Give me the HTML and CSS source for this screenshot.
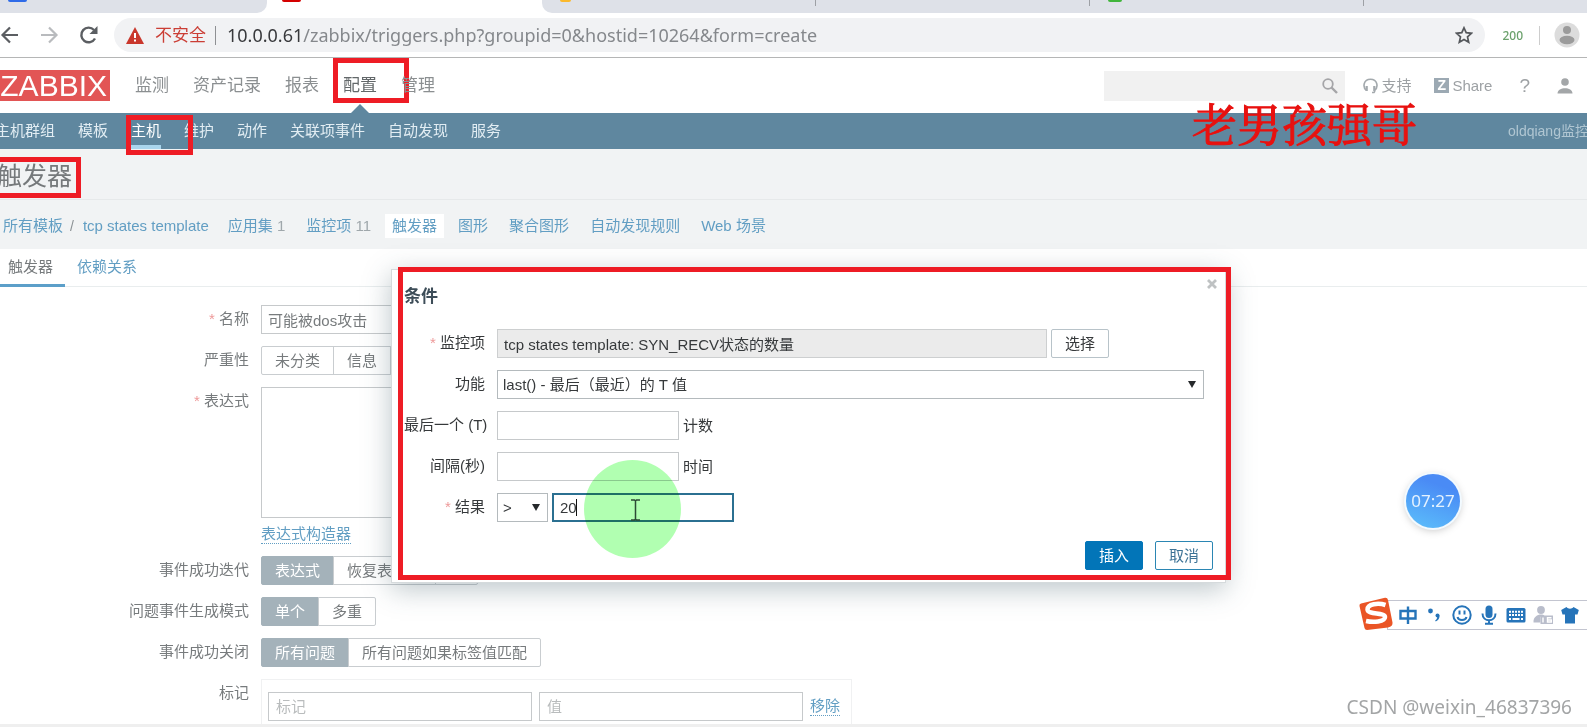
FILE: index.html
```html
<!DOCTYPE html>
<html lang="zh-CN">
<head>
<meta charset="utf-8">
<title>触发器</title>
<link rel="stylesheet" href="styles.css">
</head>
<body>
<div class="browser">
  <div class="tabstrip">
    <div class="tab tab-left"><i class="fav fav-blue"></i></div>
    <div class="tab tab-active"><i class="fav fav-red"></i></div>
    <div class="tab tab-right">
      <span class="tab-cell"><i class="fav fav-yellow"></i></span>
      <span class="tab-cell"></span>
      <span class="tab-cell"><i class="fav fav-green"></i></span>
      <span class="tab-cell"></span>
    </div>
  </div>
  <div class="toolbar">
    <div class="nav-buttons">
      <button type="button" aria-label="后退"><svg width="20" height="20" viewBox="0 0 20 20" fill="none" stroke="#5b5e62" stroke-width="2.2"><path d="M18 10H3M10 2.500 2.500 10l7.500 7.500"/></svg></button>
      <button type="button" aria-label="前进"><svg width="20" height="20" viewBox="0 0 20 20" fill="none" stroke="#b9bbbe" stroke-width="2.200"><path d="M2 10h15M10 2.500 17.500 10 10 17.500"/></svg></button>
      <button type="button" aria-label="刷新"><svg width="20" height="20" viewBox="0 0 20 20" fill="none" stroke="#5b5e62" stroke-width="2.400"><path d="M17 13.500A7.300 7.300 0 1 1 16 5"/><path d="M19.500 1v8h-8z" fill="#5b5e62" stroke="none"/></svg></button>
    </div>
    <div class="address">
      <svg width="18" height="17" viewBox="0 0 18 17"><path d="M9 0 18 17H0z" fill="#c9372c"/><path d="M8 6h2v5H8zm0 6.500h2v2H8z" fill="#fff"/></svg>
      <span class="unsafe">不安全</span>
      <span class="address-sep"></span>
      <span class="url"><b>10.0.0.61</b>/zabbix/triggers.php?groupid=0&amp;hostid=10264&amp;form=create</span>
      <svg class="star" width="18" height="18" viewBox="0 0 18 18" fill="none" stroke="#55585c" stroke-width="1.700"><path d="m9 1.800 2.200 4.900 5.300.6-4 3.600 1.200 5.300L9 13.500l-4.700 2.700 1.200-5.300-4-3.600 5.300-.6z"/></svg>
    </div>
    <span class="ext">200</span>
    <span class="toolbar-sep"></span>
    <svg class="avatar" width="26" height="26" viewBox="0 0 26 26"><circle cx="13" cy="13" r="12.500" fill="#dcdcdc"/><circle cx="13" cy="8" r="4" fill="#9b9b9b"/><ellipse cx="13" cy="18" rx="7.500" ry="4.200" fill="#9b9b9b"/></svg>
  </div>
</div>

<header class="header">
  <a class="logo" href="#">ZABBIX</a>
  <nav class="main-nav">
    <a href="#">监测</a><a href="#">资产记录</a><a href="#">报表</a><a href="#" class="current">配置<i class="mark mark-config"></i></a><a href="#">管理</a>
  </nav>
  <div class="search"><input type="text" aria-label="搜索"><svg width="16" height="16" viewBox="0 0 16 16" fill="none" stroke="#a5a5a8"><circle cx="6" cy="6" r="4.800" stroke-width="1.800"/><path d="m9.500 9.500 5.500 5.500" stroke-width="2.400"/></svg></div>
  <div class="tools">
    <a href="#" class="support"><svg width="15" height="16" viewBox="0 0 15 16" fill="none" stroke="#a3a9ad" stroke-width="1.600"><path d="M3.500 12.500C-.8 9 .6 1.300 7.500 1.300S15.800 9 11.500 12.500M9 14.500h2l1-1.500"/><path d="M3.700 8v5M11.300 8v5" stroke-width="2.200"/></svg>支持</a>
    <a href="#" class="share"><i>Z</i>Share</a>
    <a href="#" class="help">?</a>
    <a href="#" class="user" aria-label="用户"><svg width="16" height="16" viewBox="0 0 16 16" fill="#a3a6a8"><circle cx="8" cy="4" r="3.800"/><path d="M.5 15.500c0-7 15-7 15 0z"/></svg></a>
  </div>
</header>

<nav class="sub-nav">
  <a href="#">主机群组</a><a href="#">模板</a><a href="#" class="current">主机<i class="mark mark-host"></i></a><a href="#">维护</a><a href="#">动作</a><a href="#">关联项事件</a><a href="#">自动发现</a><a href="#">服务</a>
  <span class="server">oldqiang监控</span>
  <span class="banner">老男孩强哥</span>
</nav>

<div class="title-band"><h1>触发器</h1><i class="mark mark-title"></i></div>

<nav class="crumbs">
  <a href="#">所有模板</a><span class="slash">/</span><a href="#">tcp states template</a>
  <a href="#" class="item first">应用集 <em>1</em></a>
  <a href="#" class="item">监控项 <em>11</em></a>
  <a href="#" class="item selected">触发器</a>
  <a href="#" class="item">图形</a>
  <a href="#" class="item">聚合图形</a>
  <a href="#" class="item">自动发现规则</a>
  <a href="#" class="item">Web 场景</a>
</nav>

<main class="content">
  <div class="tabs"><a href="#" class="active">触发器</a><a href="#">依赖关系</a></div>
  <form class="form">
    <label class="req" for="name">名称</label>
    <input id="name" type="text" value="可能被dos攻击">
    <span class="label">严重性</span>
    <div class="seg"><button type="button">未分类</button><button type="button">信息</button><button type="button">警告</button></div>
    <label class="req" for="expr">表达式</label>
    <div class="stack"><textarea id="expr"></textarea><a class="dotted" href="#">表达式构造器</a></div>
    <span class="label">事件成功迭代</span>
    <div class="seg"><button type="button" class="on">表达式</button><button type="button">恢复表达式</button><button type="button">无</button></div>
    <span class="label">问题事件生成模式</span>
    <div class="seg"><button type="button" class="on">单个</button><button type="button">多重</button></div>
    <span class="label">事件成功关闭</span>
    <div class="seg"><button type="button" class="on">所有问题</button><button type="button">所有问题如果标签值匹配</button></div>
    <span class="label">标记</span>
    <div class="tags"><input type="text" placeholder="标记" aria-label="标记"><input type="text" placeholder="值" aria-label="值"><a class="dotted" href="#">移除</a></div>
  </form>
</main>
<div class="page-end"></div>

<section class="dialog" role="dialog" aria-labelledby="dlg-title">
  <button class="close" type="button" aria-label="关闭"><svg width="10" height="10" viewBox="0 0 10 10" stroke="#bfc2c3" stroke-width="2.800"><path d="m1 1 8 8M9 1 1 9"/></svg></button>
  <h2 id="dlg-title">条件</h2>
  <div class="dialog-grid">
    <label class="req" for="item">监控项</label>
    <div class="line"><input id="item" class="grow" type="text" readonly value="tcp states template: SYN_RECV状态的数量"><button class="btn" type="button">选择</button></div>
    <label for="func">功能</label>
    <div class="select func"><select id="func"><option>last() - 最后（最近）的 T 值</option></select></div>
    <label for="last">最后一个 (T)</label>
    <div class="line"><input id="last" type="text"><span>计数</span></div>
    <label for="shift">间隔(秒)</label>
    <div class="line"><input id="shift" type="text"><span>时间</span></div>
    <label class="req" for="result">结果</label>
    <div class="line"><div class="select op"><select aria-label="运算符"><option>&gt;</option></select></div><div class="caret-field"><input id="result" class="focused" type="text" value="20"><i class="caret"></i></div></div>
  </div>
  <div class="actions"><button class="btn primary" type="button">插入</button><button class="btn outline" type="button">取消</button></div>
  <i class="click-spot"></i>
  <svg class="ibeam" width="11" height="22" viewBox="0 0 11 22" fill="none" stroke="#2c4a35" stroke-width="1.500"><path d="M1 1h3.500l1 1 1-1H10M1 21h3.500l1-1 1 1H10M5.500 2v18"/></svg>
  <i class="mark mark-dialog"></i>
</section>

<div class="clock">07:27</div>

<div class="ime">
  <svg class="ime-logo" width="36" height="36" viewBox="0 0 36 36"><path d="M3 7.500Q1 8 1.500 10l5 22q.5 2 2.500 2l21-2.500q5-1 4.500-5L30 4q-.5-2.500-3-2.200z" fill="#ea5526"/><path d="M27.500 9C20 6.500 9.500 8 9.500 13.500c0 5.500 17.500 2.500 17.500 7.500 0 5-12 5.500-19 4" fill="none" stroke="#fff" stroke-width="4.500"/></svg>
  <svg width="20" height="20" viewBox="0 0 20 20" fill="none" stroke="#2674b9" stroke-width="2.400"><path d="M2.500 6h15v7.500h-15zM10 1.500v17.500"/></svg>
  <svg width="20" height="20" viewBox="0 0 20 20" fill="#2674b9"><circle cx="5.500" cy="6" r="2.400"/><circle cx="12.500" cy="10.500" r="2"/><path d="M14.500 10.500c.2 3-1.300 5-3.800 6l-.5-1.200c1.500-.8 2-2 2-3.300z"/></svg>
  <svg width="20" height="20" viewBox="0 0 20 20" fill="none" stroke="#2674b9" stroke-width="2"><circle cx="10" cy="10" r="8.700"/><path d="M7.500 5.500v4M12.500 5.500v4M5.500 12c1 4 8 4 9 0"/></svg>
  <svg width="20" height="20" viewBox="0 0 20 20"><rect x="6.500" y=".5" width="7" height="12.500" rx="3.500" fill="#2674b9"/><path d="M3.500 8.500c0 9 13 9 13 0M10 15v3.500M6 18.800h8" fill="none" stroke="#2674b9" stroke-width="2"/></svg>
  <svg width="20" height="20" viewBox="0 0 20 20"><rect x=".5" y="3" width="19" height="14.500" rx="1.500" fill="#2674b9"/><path d="M3 6.800h14M3 10h14" stroke="#fff" stroke-width="1.900" stroke-dasharray="2 1"/><path d="M3 14h2m1.500 0h7m1.500 0h2" stroke="#fff" stroke-width="2"/></svg>
  <svg width="20" height="20" viewBox="0 0 20 20" fill="#b9bdcb"><circle cx="8" cy="5" r="3.900"/><path d="M.5 17.500c-.5-8 9-9.500 11-6.500l-4 .8v5.700z"/><path d="M7.500 10.500H20V19H7.500z"/><path d="M10 12.500v5M18.500 12.700h-4v4.300h3.800v-2h-3.800" fill="none" stroke="#fff" stroke-width="1.400"/></svg>
  <svg width="20" height="20" viewBox="0 0 20 20" fill="#2674b9"><path d="M6.500 2c1.500 2.200 5.500 2.200 7 0L18.800 5 17.500 9.500H15v9H5v-9H2.500L1.200 5z"/></svg>
  <svg width="20" height="20" viewBox="0 0 20 20" fill="#7fb0dc"><path d="M0 2h8v7H0zM11 2h7v7h-7zM0 11h8v7H0zM11 11h7v7h-7z"/></svg>
</div>
<div class="watermark">CSDN @weixin_46837396</div>
</body>
</html>
```
FILE: styles.css
```css
* { box-sizing: border-box; }

body {
  margin: 0;
  height: 100vh;
  position: relative;
  overflow: hidden;
  display: flex;
  flex-direction: column;
  background: #fff;
  color: #777b7d;
  font: 15px/20px "Liberation Sans", "Noto Sans CJK SC", sans-serif;
}

a { color: inherit; text-decoration: none; }
button, input, select, textarea { font: inherit; color: inherit; margin: 0; }
svg { display: block; flex: none; }

/* Browser chrome */
.browser { flex: none; border-bottom: 1px solid #b5b6b6; }
.tabstrip { display: flex; height: 13px; background: #fff; }
.tab { overflow: hidden; padding-left: 8px; }
.tab-left { width: 267px; background: #dee1e8; border-bottom-right-radius: 10px; }
.tab-active { width: 275px; padding-left: 15px; }
.tab-right { flex: 1; display: flex; background: #dee1e8; border-bottom-left-radius: 10px; padding-left: 0; }
.tab-cell { flex: none; width: 274px; height: 6px; padding-left: 18px; border-right: 1px solid #9da0a5; }
.tab-cell:last-child { border: 0; }
.fav { display: block; width: 19px; height: 2px; border-radius: 0 0 3px 3px; }
.fav-blue { background: #2f6be8; }
.fav-red { background: #d40000; }
.fav-yellow { width: 11px; background: #fbb92c; }
.fav-green { width: 14px; background: #41b53c; }

.toolbar { display: flex; align-items: center; height: 44px; padding-right: 7px; }
.nav-buttons { display: flex; gap: 19px; width: 114px; }
.nav-buttons button { border: 0; padding: 0; background: none; }
.address {
  flex: 1;
  display: flex;
  align-items: center;
  height: 34px;
  padding: 0 12px;
  border-radius: 17px;
  background: #f1f2f4;
  font-family: "Noto Sans", "Noto Sans CJK SC", sans-serif;
  font-size: 18px;
}
.unsafe { margin-left: 11px; font-size: 17px; color: #cb3e35; }
.address-sep { width: 1px; height: 19px; margin: 0 11px 0 9px; background: #8e9093; }
.url { flex: 1; color: #85888c; }
.url b { font-weight: 400; color: #38393c; }
.ext { margin-left: 17px; font: 500 12px "Noto Sans", sans-serif; color: #6ba16c; }
.toolbar-sep { width: 1px; height: 19px; margin: 0 14px 0 16px; background: #cdcdcd; }

/* Application header */
.header { flex: none; display: flex; align-items: center; height: 55px; padding-right: 14px; }
.logo {
  display: flex;
  justify-content: flex-end;
  width: 110px;
  height: 31px;
  padding-right: 3px;
  background: #e25555;
  color: #fff;
  font-size: 30px;
  line-height: 32px;
}
.main-nav { display: flex; gap: 24px; margin-left: 25px; font-size: 17px; color: #8b8f91; }
.main-nav a { position: relative; }
.main-nav .current { color: #63686a; }
.main-nav .current::after {
  content: "";
  position: absolute;
  left: 8px;
  top: 28px;
  border: 9px solid transparent;
  border-top: 0;
  border-bottom-color: #5f879f;
}
.search { display: flex; align-items: center; width: 241px; height: 30px; margin-left: auto; padding-right: 7px; background: #f1f1f1; }
.search input[type="text"] { flex: 1; min-width: 0; border: 0; background: none; }
.tools { display: flex; align-items: center; color: #9da1a4; }
.tools a { display: flex; align-items: center; gap: 3px; }
.support { margin-left: 18px; }
.share { margin-left: 23px; }
.share i { width: 15px; height: 15px; background: #9ca9b3; color: #fff; font: bold 14px/15px "Liberation Sans", sans-serif; text-align: center; }
.tools .help { margin-left: 27px; font-size: 19px; }
.user { margin-left: 27px; }

.sub-nav {
  flex: none;
  display: flex;
  position: relative;
  gap: 23px;
  height: 36px;
  line-height: 36px;
  margin-left: -5px;
  background: #5f879f;
  color: #e2edf3;
}
.sub-nav a { position: relative; white-space: nowrap; }
.sub-nav .current { color: #fff; }
.sub-nav .current::after { content: ""; position: absolute; left: 0; right: 0; bottom: 0; height: 4px; background: #a9d5ed; }
.server { width: 79px; margin-left: auto; white-space: nowrap; color: #b0c6d2; font-size: 14px; }
.banner {
  position: absolute;
  right: 170px;
  top: -13px;
  color: #e8110f;
  font: 45px/46px "Noto Serif CJK SC", "Noto Sans CJK SC", serif;
  -webkit-text-stroke: 1px #e8110f;
}

.title-band { flex: none; position: relative; height: 51px; padding-top: 12px; background: #f1f3f4; border-bottom: 1px solid #e6e9ea; }
h1 { margin: 0 0 0 -3px; font-size: 25px; line-height: 30px; font-weight: 400; color: #75797b; }

.crumbs { flex: none; display: flex; align-items: center; height: 49px; padding: 3px 0 0 3px; background: #f1f3f4; color: #629ec3; white-space: nowrap; }
.crumbs em { font-style: normal; color: #9fa7ab; }
.slash { margin: 0 9px 0 7px; color: #8b9195; font-size: 14px; }
.crumbs .item { margin-left: 7px; padding: 2px 7px; }
.crumbs .first { margin-left: 12px; }
.selected { background: #fff; }

/* Trigger form */
.content { flex: 1; min-height: 0; overflow: hidden; }
.tabs { display: flex; height: 38px; border-bottom: 1px solid #e9edee; }
.tabs a { padding: 8px 12px 0 12px; color: #629ec3; }
.tabs .active { height: 38px; padding-left: 8px; border-bottom: 3px solid #5c9fc9; color: #777b7d; }
.form { display: grid; grid-template-columns: 249px auto; column-gap: 12px; row-gap: 12px; padding-top: 18px; justify-content: start; }
.form > label, .label { text-align: right; line-height: 28px; }
.req::before { content: "* "; color: #e99; }
input[type="text"], textarea { height: 29px; border: 1px solid #c6c9cb; padding: 0 7px; background: #fff; outline: 0; }
#name, textarea { width: 455px; display: block; }
#name { padding: 0 6px; }
textarea { height: 131px; resize: none; }
.dotted { color: #629ec3; border-bottom: 1px dotted #629ec3; line-height: 18px; }
.stack { display: flex; flex-direction: column; align-items: flex-start; gap: 7px; }
.seg { display: flex; }
.seg button { height: 29px; border: 1px solid #c9cdd0; padding: 0 13px; background: #fff; line-height: 20px; margin-left: -1px; white-space: nowrap; }
.seg button:first-child { margin-left: 0; border-radius: 2px 0 0 2px; }
.seg button:last-child { border-radius: 0 2px 2px 0; }
.seg .on { background: #a4b2ba; border-color: #a4b2ba; color: #fff; }
.tags { display: flex; align-items: center; gap: 7px; padding: 12px 11px 12px 6px; border: 1px solid #f0f1f2; }
.tags input { width: 264px; }
::placeholder { color: #b9bcbd; opacity: 1; }
.page-end { flex: none; height: 3px; background: #efefef; }

/* Condition dialog */
.dialog {
  position: absolute;
  left: 391px;
  top: 269px;
  width: 835px;
  padding: 16px 12px 12px;
  background: #fff;
  border: 1px solid #d5dadc;
  box-shadow: 0 6px 26px rgba(60, 90, 100, .35);
  color: #36393b;
}
h2 { margin: 0; font-size: 17px; line-height: 22px; color: #3d4d58; }
.dialog-grid { display: grid; grid-template-columns: 81px minmax(0, 1fr); column-gap: 12px; row-gap: 12px; margin-top: 21px; padding-right: 9px; }
.dialog-grid label { text-align: right; line-height: 28px; white-space: nowrap; }
.line { display: flex; align-items: center; gap: 4px; }
.line input[type="text"] { width: 182px; }
.line input[type="text"].grow { width: 550px; padding: 0 6px; background: #ebebeb; border-color: #cdcfd0; }
.line input[type="text"].focused { border: 2px solid #2b7091; padding: 0 6px; }
.select { position: relative; height: 29px; }
.select select { appearance: none; width: 100%; height: 29px; border: 1px solid #b4babd; border-radius: 0; padding: 1px 5px 0; background: #fff; }
.select::after { content: ""; position: absolute; right: 8px; top: 11px; border: 4px solid transparent; border-top: 7px solid #26292b; border-bottom: 0; }
.op { width: 51px; }
.caret-field { position: relative; }
.caret { position: absolute; left: 24px; top: 6px; width: 1px; height: 17px; background: #111; }
.btn { height: 29px; padding: 0 13px; border: 1px solid #b8c3c9; border-radius: 2px; background: #fff; white-space: nowrap; }
.actions { display: flex; justify-content: flex-end; gap: 12px; margin-top: 19px; }
.primary { background: #0275b8; border-color: #0275b8; color: #fff; }
.outline { border-color: #2b86b3; color: #3d7396; }
.close { position: absolute; right: 8px; top: 9px; border: 0; padding: 0; background: none; }
.click-spot { position: absolute; left: 192px; top: 190px; width: 97px; height: 98px; border-radius: 50%; background: #7dff7d; opacity: .6; mix-blend-mode: multiply; }
.ibeam { position: absolute; left: 238px; top: 229px; }

/* Highlight frames */
.mark { position: absolute; border: 5px solid #ee1c25; }
.mark-config { left: -10px; top: -18px; width: 76px; height: 45px; }
.mark-host { left: -5px; top: 2px; width: 67px; height: 40px; z-index: 1; }
.mark-title { left: -5px; top: 8px; width: 86px; height: 41px; }
.mark-dialog { left: 6px; top: -3px; width: 833px; height: 313px; }

/* Floating desktop widgets */
.clock {
  position: absolute;
  right: 127px;
  top: 474px;
  width: 54px;
  height: 54px;
  border-radius: 50%;
  background: linear-gradient(20deg, #5cc0fb, #4a8bf5 75%);
  box-shadow: 0 0 0 2px #f2faff, 0 2px 8px rgba(0, 0, 0, .25);
  color: #e4f2ff;
  font: 17px/54px "Noto Sans", sans-serif;
  text-align: center;
}
.ime {
  position: absolute;
  left: 1387px;
  right: 0;
  top: 600px;
  height: 30px;
  display: flex;
  align-items: center;
  gap: 7px;
  padding-left: 10px;
  border: 1px solid #c3c5d0;
  border-right: 0;
  background: #fff;
}
.ime-logo { position: absolute; left: -30px; top: -5px; }
.watermark { position: absolute; right: 15px; top: 692px; font: 19px/30px "Noto Sans", sans-serif; color: #a3a5a6; text-shadow: 1px 1px 0 #fff; }
```
